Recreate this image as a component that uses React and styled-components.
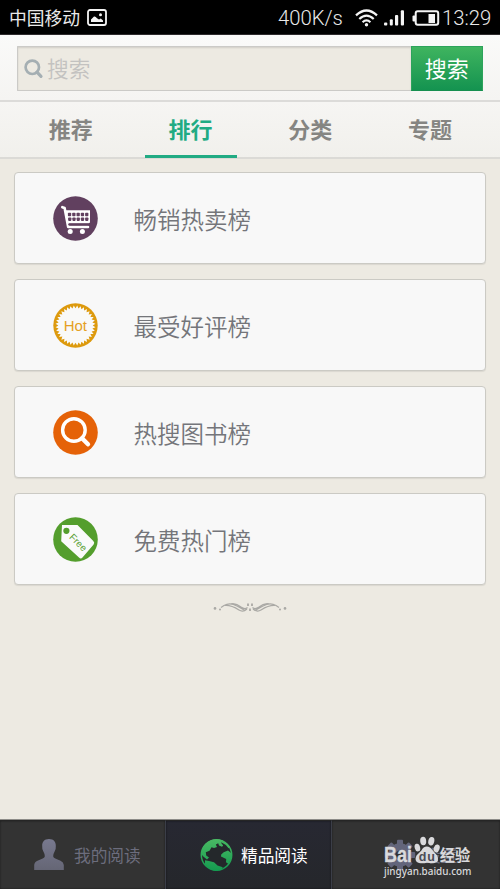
import React from 'react';
import styled, { createGlobalStyle } from 'styled-components';

const Global = createGlobalStyle`
  * { box-sizing: border-box; }
  body { margin: 0; background: #edeae2; font-family: "Noto Sans CJK SC", sans-serif; }
  svg { display: block; flex: none; overflow: visible; }
`;

const Screen = styled.div`
  width: 500px;
  height: 889px;
  display: flex;
  flex-direction: column;
  overflow: hidden;
  background: #edeae2;
`;

const StatusBar = styled.header`
  height: 35px;
  flex: none;
  display: flex;
  align-items: center;
  padding: 0 9px;
  background: #000;
  border-bottom: 1px solid #2d2a2c;
  color: #e9e9e9;
`;
const Carrier = styled.span`
  font-size: 17.8px;
  line-height: 34px;
  width: 78px;
  white-space: nowrap;
`;
const StatusRight = styled.div`
  margin-left: auto;
  display: flex;
  align-items: center;
`;
const StatusText = styled.span`
  font-family: Roboto, sans-serif;
  font-weight: 300;
  font-size: 20.3px;
  line-height: 34px;
  width: ${(p) => p.$w}px;
  padding-top: 2px;
  white-space: nowrap;
`;

const SearchBar = styled.div`
  height: 67px;
  flex: none;
  display: flex;
  padding: 11px 17px;
  background: linear-gradient(#fafaf9, #f5f4f2);
  border-bottom: 2px solid #dcdbd9;
`;
const SearchField = styled.div`
  flex: 1;
  height: 45px;
  display: flex;
  align-items: center;
  gap: 4px;
  padding: 0 0 1px 6px;
  border: 1px solid #cbcac7;
  border-right: 0;
  border-radius: 1px 0 0 1px;
  box-shadow: inset 0 1px 2px rgba(0, 0, 0, 0.12);
  background: #edeae2;
  color: #c3c2c0;
  font-size: 21.7px;
  line-height: 42px;
  font-weight: 350;
`;
const SearchButton = styled.button`
  width: 72.5px;
  height: 45px;
  padding: 0 0 3px;
  border: 1px solid #2ca35b;
  border-bottom-color: #168f50;
  background: linear-gradient(#3fb45f, #149350);
  color: #fff;
  font: 400 22px "Noto Sans CJK SC", sans-serif;
`;

const Tabs = styled.nav`
  height: 57px;
  flex: none;
  display: flex;
  padding: 0 10px 0 11px;
  background: linear-gradient(#f6f5f3, #f1f0ec);
  border-bottom: 2px solid #dbdad6;
`;
const Tab = styled.div`
  flex: 1;
  height: 56px;
  display: flex;
  justify-content: center;
  color: ${(p) => (p.$active ? '#21ab83' : '#858582')};
  font-size: 22px;
  font-weight: 700;
  line-height: 52px;
`;
const TabLabel = styled.span`
  width: 92px;
  height: 56px;
  text-align: center;
  border-bottom: 3px solid ${(p) => (p.$active ? '#21ab83' : 'transparent')};
`;

const List = styled.main`
  flex: 1;
  display: flex;
  flex-direction: column;
  align-items: center;
  gap: 15px;
  padding: 13px 14px 0;
`;
const Card = styled.section`
  width: 472px;
  height: 92px;
  display: flex;
  align-items: center;
  gap: 36px;
  padding: 0 37.5px;
  background: #f8f8f8;
  border: 1px solid #cbcac4;
  border-radius: 4px;
  box-shadow: 0 1px 1px rgba(0, 0, 0, 0.08);
`;
const CardTitle = styled.span`
  color: #74757a;
  font-size: 23.5px;
  font-weight: 350;
  line-height: 40px;
  padding-top: 2px;
`;
const OrnamentRow = styled.div`
  padding-top: 2px;
`;

const BottomNav = styled.footer`
  height: 70px;
  flex: none;
  display: grid;
  grid-template-columns: 166px 166px 168px;
  border-top: 1px solid #8d8c88;
`;
const NavItem = styled.div`
  position: relative;
  display: flex;
  align-items: center;
  gap: ${(p) => p.$gap}px;
  padding-left: ${(p) => p.$left}px;
  padding-bottom: 1px;
  background: ${(p) => (p.$active ? 'linear-gradient(#272832, #25272b)' : '#333')};
  border-top: 1px solid #252525;
  border-right: ${(p) => (p.$last ? 0 : 1)}px solid #3b3e48;
  box-shadow: inset 0 0 2px rgba(0, 0, 0, 0.6);
  color: ${(p) => (p.$active ? '#fff' : '#6c6d7d')};
  font-size: 16.7px;
  line-height: 24px;
  white-space: nowrap;
`;
const Watermark = styled.div`
  position: absolute;
  left: 52px;
  top: 14px;
  width: 90px;
  height: 46px;
`;

const PictureIcon = () => (
  <svg width="20" height="17" viewBox="0 0 20 17">
    <rect x="1" y="1" width="18" height="15" rx="2" fill="none" stroke="#f4f4f4" strokeWidth="1.8" />
    <path d="M4 13V10.5L7 7.5Q8.5 7 10 9.2L12 10.6L13.8 9.5L16 11.5V13Z" fill="#f4f4f4" />
    <circle cx="13.5" cy="5.7" r="1.5" fill="#f4f4f4" />
  </svg>
);
const StatusIcons = () => (
  <svg width="87" height="18" viewBox="0 -1 87 18">
    <g fill="none" stroke="#f4f4f4" strokeWidth="2.2">
      <path d="M1 6.4Q11.5 -3.4 22 6.4" />
      <path d="M4.3 10Q11.5 3.2 18.7 10" />
      <path d="M7.6 13.3Q11.5 9.6 15.4 13.3" />
    </g>
    <circle cx="11.5" cy="15.7" r="1.7" fill="#f4f4f4" />
    <g fill="#f4f4f4">
      <rect x="29" y="13.5" width="3.3" height="3" rx="1" />
      <rect x="34.8" y="10.2" width="3" height="6.3" rx="1" />
      <rect x="40" y="6" width="3.2" height="10.5" rx="1" />
      <rect x="45.8" y="1.2" width="3.2" height="15.3" rx="1" />
      <rect x="57.5" y="6.5" width="3" height="6" rx="1" />
      <rect x="73.5" y="5" width="6.5" height="9" />
    </g>
    <rect x="60.7" y="2.3" width="22.5" height="13.4" rx="2" fill="none" stroke="#f4f4f4" strokeWidth="2" />
  </svg>
);
const SearchGlyph = () => (
  <svg width="19" height="19" viewBox="0 0 19 19" fill="none" stroke="#a5afb3">
    <circle cx="8.3" cy="8.3" r="6.7" strokeWidth="2.7" />
    <path d="M13 13.2L17 17.3" strokeWidth="3.2" strokeLinecap="round" />
  </svg>
);

const CartIcon = () => (
  <svg width="45" height="45" viewBox="0 0 45 45">
    <circle cx="22.5" cy="22.5" r="22.3" fill="#61405f" />
    <path d="M9.3 11.2L11.6 12L15.2 31H35" fill="none" stroke="#fff" strokeWidth="2.6" strokeLinecap="round" strokeLinejoin="round" />
    <path d="M12 14.3H37V26.5L35.8 27.2H14.5Z" fill="#fff" />
    <path d="M15.2 28.5H36.5" stroke="#61405f" strokeWidth="1.6" />
    <g fill="#61405f">
      {[0, 1, 2, 3, 4].map((c) => (
        <React.Fragment key={c}>
          <rect x={14.9 + c * 4.3} y="16.8" width="3.3" height="3.4" rx=".8" />
          <rect x={15.1 + c * 4.25} y="21.5" width="3.3" height="3.4" rx=".8" />
        </React.Fragment>
      ))}
    </g>
    <circle cx="17.2" cy="35.6" r="2.5" fill="#fff" />
    <circle cx="29.4" cy="35.6" r="2.5" fill="#fff" />
  </svg>
);

const TEETH = 36;
const ringPath = Array.from({ length: TEETH * 2 }, (_, i) => {
  const a = (i * Math.PI) / TEETH;
  const r = i % 2 ? 20 : 17.2;
  return `${i ? 'L' : 'M'}${(22.5 + r * Math.cos(a)).toFixed(2)} ${(22.5 + r * Math.sin(a)).toFixed(2)}`;
}).join('');
const HotIcon = () => (
  <svg width="45" height="45" viewBox="0 0 45 45">
    <circle cx="22.5" cy="22.5" r="22.2" fill="#dd9a0e" />
    <path d={`${ringPath}Z`} fill="#f9f9f8" />
    <text x="22.3" y="27.8" textAnchor="middle" fontFamily="Liberation Sans, sans-serif" fontSize="15" fill="#e5a023">Hot</text>
  </svg>
);
const FindIcon = () => (
  <svg width="45" height="45" viewBox="0 0 45 45">
    <circle cx="22.5" cy="22.5" r="22.3" fill="#e56208" />
    <g fill="none" stroke="#fff">
      <circle cx="20.9" cy="20" r="11.3" strokeWidth="3.4" />
      <path d="M29 28.3L35 34.3" strokeWidth="4.4" strokeLinecap="round" />
    </g>
  </svg>
);
const FreeIcon = () => (
  <svg width="45" height="45" viewBox="0 0 45 45">
    <circle cx="22.5" cy="22.5" r="22.3" fill="#549e2d" />
    <path d="M9 8H24.5L40.3 24Q42 25.8 40.6 27.5L29.5 40.5Q27.8 42.3 26 40.5L8.2 24.3Z" fill="#fafafa" />
    <circle cx="13.4" cy="13.8" r="3.1" fill="#549e2d" />
    <text transform="translate(15.8 20.8) rotate(45)" fontFamily="Liberation Sans, sans-serif" fontSize="9.7" fill="#5a9f34" textLength="20">Free</text>
  </svg>
);

const Ornament = () => (
  <svg width="74" height="12" viewBox="0 0 74 12" fill="none" stroke="#aaa9a5" strokeWidth="1.2">
    {['', 'translate(74 0) scale(-1 1)'].map((t) => (
      <g key={t} transform={t}>
        <path d="M8 5.5L11 3.5Q17 0 24 4L32 8.5M12 3.5Q18 3 26 8Q30 10.5 34 7M18 1.8Q23 .8 28 5Q32 8 34.5 5.5" />
        <circle cx="2" cy="6.4" r="1.3" fill="#aaa9a5" stroke="none" />
        <circle cx="7" cy="7.5" r="1" fill="#aaa9a5" stroke="none" />
      </g>
    ))}
    <path d="M35 1.5V4M39 1.5V4M37 6.5V9" strokeWidth="1.8" />
  </svg>
);

const PersonIcon = () => (
  <svg width="30" height="31" viewBox="0 0 30 31">
    <defs>
      <linearGradient id="person" x2="0" y2="1"><stop stopColor="#78798f" /><stop offset="1" stopColor="#656675" /></linearGradient>
    </defs>
    <path d="M15 0C10.4 0 8 2.8 8.2 7Q7.8 10 9.6 13Q10.8 15 10.8 17Q11 19 7 20.3L3.5 21.7Q.4 23 .2 26V31H29.8V26Q29.6 23 26.5 21.7L23 20.3Q19 19 19.2 17Q19.2 15 20.4 13Q22.2 10 21.8 7C22 2.8 19.6 0 15 0Z" fill="url(#person)" />
  </svg>
);
const GlobeIcon = () => (
  <svg width="33" height="34" viewBox="0 0 33 34">
    <defs>
      <linearGradient id="land" x2="0" y2="1"><stop stopColor="#49b963" /><stop offset="1" stopColor="#149b50" /></linearGradient>
    </defs>
    <circle cx="16.5" cy="17" r="15.2" fill="#24282b" stroke="url(#land)" strokeWidth="1.5" />
    <path d="M1.2 16Q1.4 8 8 3.7Q15-.8 23.3 2.8L21 4.8L23.2 7.4L22 8.8L19 7.5L18.2 5.2L15.8 6.6L17 9L14 10L11.5 9.2L9.5 12.8L5.8 14.2L6.2 17.5L9 19.4L7 21.6L3.3 18.5ZM23.7 14.2L28 12.6L31.7 15.4V20L28.5 26L26 24.3L26.2 21L21 18.4L21.2 16.4ZM5 22.2L9 23L14 24.2L17.5 27.5L22.8 29.2L21 32L15.5 33L9.3 31L5 26.5Z" fill="url(#land)" />
    <path d="M21.5 3.4Q26.5 5.5 29.4 9.6" fill="none" stroke="#3fb45f" strokeWidth="2" />
  </svg>
);
const GearIcon = () => (
  <svg width="30" height="30" viewBox="0 0 30 30">
    <g fill="#63657b">
      {[0, 45, 90, 135].map((a) => (
        <rect key={a} x="12" y="-.2" width="6" height="30.4" rx="1" transform={`rotate(${a} 15 15)`} />
      ))}
      <circle cx="15" cy="15" r="11.8" />
    </g>
    <circle cx="15" cy="15" r="4.6" fill="#333" />
  </svg>
);
const WatermarkArt = () => (
  <svg width="90" height="46" viewBox="0 0 90 46" fill="#d9d9dc">
    <text x="0" y="27" fontFamily="Liberation Sans, sans-serif" fontWeight="700" fontSize="22" stroke="#d9d9dc" strokeWidth=".3" textLength="28" lengthAdjust="spacingAndGlyphs">Bai</text>
    <g>
      <ellipse cx="33.4" cy="12.6" rx="2.7" ry="3.9" transform="rotate(-15 33.4 12.6)" />
      <ellipse cx="39.2" cy="6" rx="3" ry="4.3" transform="rotate(-5 39.2 6)" />
      <ellipse cx="47.3" cy="6.2" rx="3" ry="4.3" transform="rotate(12 47.3 6.2)" />
      <ellipse cx="52.7" cy="13.4" rx="2.9" ry="4" transform="rotate(18 52.7 13.4)" />
      <path d="M42.8 11.5Q46.3 11.5 48.3 15L53.2 20.5Q56 27 50.5 28Q47 28.5 43 27.8Q38.5 28.7 35 28Q29.5 26.5 32.5 20.5L37.4 15.5Q39.3 11.5 42.8 11.5Z" />
    </g>
    <text x="34.8" y="26" fontFamily="Liberation Sans, sans-serif" fontWeight="700" fontSize="12.5" fill="#4b4c56" textLength="16">du</text>
    <text x="55.8" y="26" fontFamily="Noto Sans CJK SC, sans-serif" fontWeight="700" fontSize="15.5" textLength="30.5" lengthAdjust="spacingAndGlyphs">经验</text>
    <text x="0" y="40.3" fontFamily="Noto Sans, sans-serif" fontWeight="500" fontSize="11.4" textLength="87.5" lengthAdjust="spacingAndGlyphs">jingyan.baidu.com</text>
  </svg>
);

const tabs = ['推荐', '排行', '分类', '专题'];
const rankings = [
  { title: '畅销热卖榜', Icon: CartIcon },
  { title: '最受好评榜', Icon: HotIcon },
  { title: '热搜图书榜', Icon: FindIcon },
  { title: '免费热门榜', Icon: FreeIcon },
];

export default function App() {
  return (
    <Screen>
      <Global />
      <StatusBar>
        <Carrier>中国移动</Carrier>
        <PictureIcon />
        <StatusRight>
          <StatusText $w={77}>400K/s</StatusText>
          <StatusIcons />
          <StatusText $w={49}>13:29</StatusText>
        </StatusRight>
      </StatusBar>
      <SearchBar>
        <SearchField><SearchGlyph />搜索</SearchField>
        <SearchButton>搜索</SearchButton>
      </SearchBar>
      <Tabs>
        {tabs.map((label, i) => (
          <Tab key={label} $active={i === 1}>
            <TabLabel $active={i === 1}>{label}</TabLabel>
          </Tab>
        ))}
      </Tabs>
      <List>
        {rankings.map(({ title, Icon }) => (
          <Card key={title}><Icon /><CardTitle>{title}</CardTitle></Card>
        ))}
        <OrnamentRow><Ornament /></OrnamentRow>
      </List>
      <BottomNav>
        <NavItem $left={34} $gap={10}><PersonIcon />我的阅读</NavItem>
        <NavItem $active $left={34} $gap={8}><GlobeIcon />精品阅读</NavItem>
        <NavItem $last $left={53} $gap={9}>
          <GearIcon />设置
          <Watermark><WatermarkArt /></Watermark>
        </NavItem>
      </BottomNav>
    </Screen>
  );
}
